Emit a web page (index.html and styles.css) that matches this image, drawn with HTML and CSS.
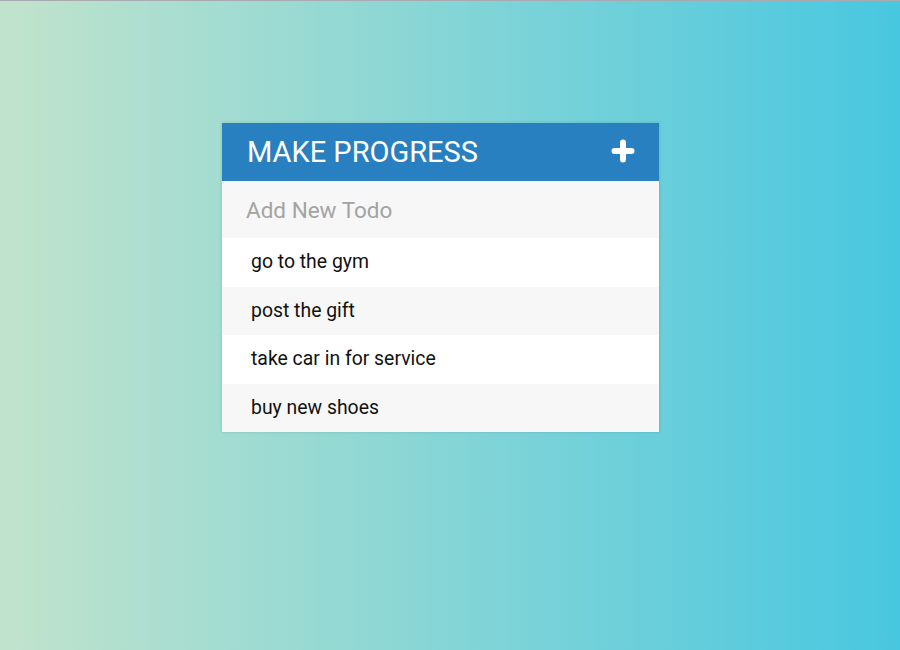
FILE: index.html
```html
<!DOCTYPE html>
<html>
<head>
<meta charset="utf-8">
<link rel="stylesheet" href="styles.css">
</head>
<body>
<div class="topline"></div>
<div class="card">
  <div class="header">
    <h1 class="title">MAKE PROGRESS</h1>
    <svg class="plus" width="24" height="24" viewBox="0 0 24 24"><path d="M12 3.5V20.5M3.5 12H20.5" stroke="#fff" stroke-width="6" stroke-linecap="round" fill="none"/></svg>
  </div>
  <input class="new" type="text" placeholder="Add New Todo">
  <ul class="list">
    <li class="item">go to the gym</li>
    <li class="item">post the gift</li>
    <li class="item">take car in for service</li>
    <li class="item">buy new shoes</li>
  </ul>
</div>
</body>
</html>
```
FILE: styles.css
```css
html, body {
  margin: 0;
  padding: 0;
  height: 100%;
}
body {
  background: linear-gradient(to right, #c1e3cc, #48c7e0);
  font-family: Roboto, "Liberation Sans", sans-serif;
  overflow: hidden;
}
.topline {
  height: 1px;
  background: #a9a9b1;
}
.card {
  width: 437px;
  margin: 122px 0 0 222px;
  background: #fff;
  box-shadow: 0 0 3px rgba(0, 0, 0, 0.15);
}
.header {
  height: 58px;
  background: #2980c0;
  display: flex;
  align-items: center;
  justify-content: space-between;
  padding: 0 24px 0 25px;
}
.title {
  margin: 0;
  font-size: 29px;
  font-weight: 400;
  color: #fff;
  line-height: 1;
  letter-spacing: 0;
}
.plus {
  display: block;
  margin-top: -3px;
}
.new {
  display: block;
  width: 100%;
  box-sizing: border-box;
  height: 57px;
  border: none;
  outline: none;
  background: #f7f7f7;
  padding: 0 24px;
  font-family: Roboto, "Liberation Sans", sans-serif;
  font-size: 22.5px;
  color: #333;
}
.new::placeholder {
  color: #a3a3a3;
}
.list {
  list-style: none;
  margin: 0;
  padding: 0;
}
.item {
  height: 48.5px;
  line-height: 48.5px;
  padding-left: 29px;
  font-size: 19.4px;
  color: #111;
  background: #fff;
}
.item:nth-child(even) {
  background: #f7f7f7;
}
```
